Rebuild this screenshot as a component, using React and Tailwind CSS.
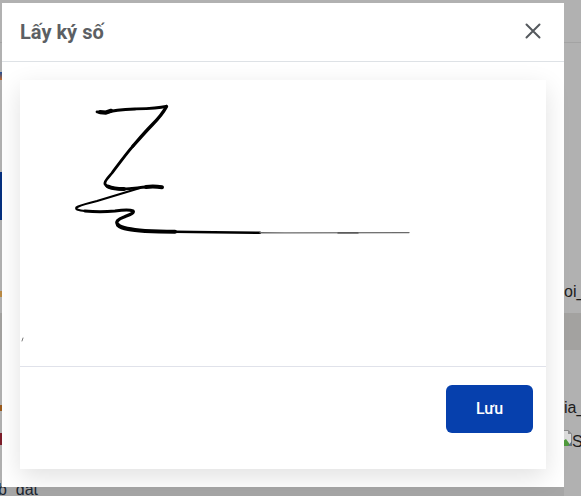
const F = { fontFamily: '"Liberation Sans", sans-serif' };
export default function App() {
  return (
    <div className="relative w-[581px] h-[496px] overflow-hidden bg-[#b1b1b1]" style={F}>
      {/* page behind the dialog */}
      <div className="flex flex-col text-[16px] leading-5 text-[#1c1c1c] whitespace-nowrap">
        <div className="h-[43px] border-b border-[#a3a3a3]" />
        <div className="h-[129px] pt-[29px]">
          <div className="w-[2px] h-[8px] bg-[linear-gradient(#1f4f9a,#c0672a)]" />
        </div>
        <div className="h-[48px] w-[2px] bg-[#06307f]" />
        <div className="h-[62px]" />
        <div className="h-[31px] flex justify-between">
          <div className="w-[2px] h-[6px] mt-[9px] bg-[#b98a45]" />
          <span className="w-[17px]">oi_</span>
        </div>
        <div className="h-[37px] bg-[#a3a2a0]" />
        <div className="h-[48px]" />
        <div className="h-[34px] flex justify-between">
          <div className="w-[2px] h-[6px] mt-[7px] bg-[#9a5a1c]" />
          <span className="w-[17px]">ia_</span>
        </div>
        <div className="h-[48px] flex justify-between">
          <div className="w-[2px] h-[12px] mt-[1px] bg-[#7c1d2a]" />
          <div className="w-[18px] flex items-start">
            <svg className="-mt-[3px] shrink-0" width="9" height="18" viewBox="0 0 9 18">
              <path d="M0.5 1.5h5l3 3.5v11.5h-8z" fill="#dcdcdc" stroke="#8a8a8a" strokeWidth="1" />
              <path d="M5 1v4h4z" fill="#8f8f8f" />
              <path d="M0 12l3-2 5 7H0z" fill="#4f9a3c" />
              <path d="M5 17l4-5v5z" fill="#5f6f80" />
            </svg>
            <span>S</span>
          </div>
        </div>
        <div className="h-[16px] flex">
          <div className="w-[564px] bg-[#a6a6a6] text-[#1a2530]">
            <span className="-ml-[2px] inline-block">b_dat</span>
          </div>
        </div>
      </div>
      {/* dialog */}
      <div className="absolute left-[2px] top-[3px] w-[562px] h-[484px] bg-white flex flex-col">
        <div className="h-[59px] shrink-0 border-b border-[#dee2e6] flex items-center justify-between pl-[18px] pr-[23px]">
          <span className="font-['Roboto',sans-serif] font-bold text-[20px] text-[#5c5f63]">Lấy ký số</span>
          <svg className="mb-[3px]" width="16" height="16" viewBox="0 0 16 16" fill="none" stroke="#55595e" strokeWidth="2" strokeLinecap="round"><path d="M1.5 1.5l13 13M14.5 1.5l-13 13" /></svg>
        </div>
        <div className="pt-[18px] px-[18px]">
          <div className="w-[526px] h-[389px] bg-white flex flex-col shadow-[0_8px_24px_rgba(0,0,0,0.12)]">
            <div className="h-[287px] shrink-0 border-b border-[#e0e2ea]">
              <svg width="526" height="286" viewBox="20 80 526 286" fill="none" stroke="#000" strokeLinecap="round" strokeLinejoin="round">
                <path strokeWidth="2.8" d="M97 111.8C100 112.5 103 113 106 112.5C112 110.5 120 109.5 135 109C147 108.6 158 108.3 166 106.3" />
                <path strokeWidth="4.2" d="M100 112.2L106 112.6L111 110.8" />
                <path strokeWidth="3.4" d="M166.5 106.5C163 113 158 119 152 125C146 131 140 138 133 146" />
                <path strokeWidth="2.8" d="M133 146C126 154 118 165 112 173C108 178 104 181 105 184C106 187 112 188.5 120 189C130 189.5 138 187.5 146 187" />
                <path strokeWidth="4" d="M108 186.5C112 188.4 118 189 124 189M146 187C152 186.3 157 186.6 162 187.2" />
                <path strokeWidth="2.2" d="M140 188C125 192.5 110 197 97 201C88 203.5 80 205 76.5 207.5C75 209.5 79 210.5 85 211" />
                <path strokeWidth="3.2" d="M85 211C95 212 105 212 115 211C122 210 130 209.5 133 211C135 213 129 215 124 217C118 219 115 222 118 225" />
                <path strokeWidth="4" d="M118 225C122 229 132 230 145 231C155 231.6 165 231.8 175 231.8" />
                <path strokeWidth="2.4" d="M175 231.8C195 232.2 220 232.6 260 232.8" />
                <path strokeWidth="1.4" stroke="#6a6a6a" d="M260 232.8C300 233 320 233 409 232.6" />
                <path strokeWidth="1.2" stroke="#3a3a3a" d="M338 233H358" />
                <path strokeWidth="1" stroke="#777" d="M23 338l-1 3" />
              </svg>
            </div>
            <div className="flex justify-end pt-[18px] pr-[13px]">
              <button className="w-[87px] h-[48px] rounded-[6px] bg-[#0640ad] text-white text-[16px] font-medium font-['Roboto',sans-serif]">Lưu</button>
            </div>
          </div>
        </div>
      </div>
    </div>
  );
}
